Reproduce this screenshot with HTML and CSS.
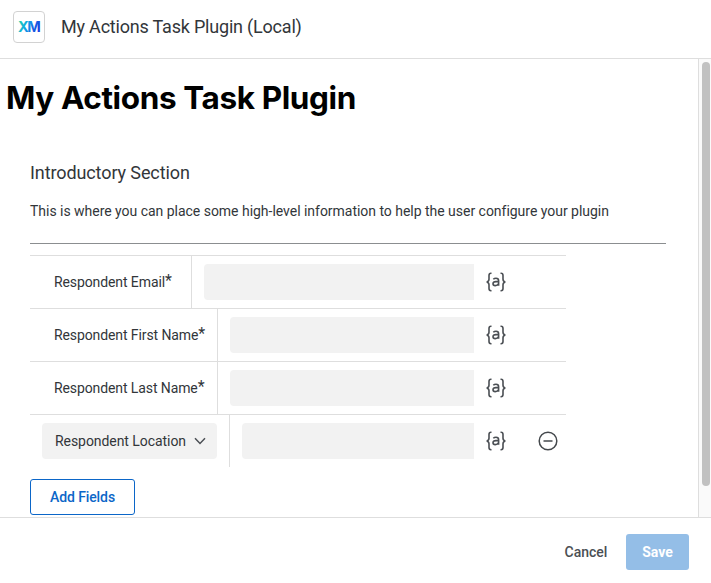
FILE: index.html
```html
<!DOCTYPE html>
<html lang="en">
<head>
<meta charset="utf-8">
<title>My Actions Task Plugin</title>
<link rel="stylesheet" href="styles.css">
</head>
<body>
<svg class="defs" aria-hidden="true">
  <symbol id="piped" viewBox="0 0 22 20">
    <path d="M6.5 1.2H6Q4 1.2 4 3.4V7.2Q4 9.5 1.7 10Q4 10.5 4 12.8V16.6Q4 18.8 6 18.8H6.5M15.5 1.2H16Q18 1.2 18 3.4V7.2Q18 9.5 20.3 10Q18 10.5 18 12.8V16.6Q18 18.8 16 18.8H15.5"/>
    <path d="M8.3 7.3Q9.3 6.3 11 6.3Q13.6 6.3 13.6 8.7V13.7M13.6 9.6H11Q8 9.7 8 11.7Q8 13.6 10.2 13.6Q12.6 13.6 13.6 11.6"/>
  </symbol>
</svg>
<div class="dialog">
  <header class="header">
    <div class="logo">
      <svg width="24" height="18" viewBox="0 0 24 18">
        <defs><linearGradient id="xm" x1="0" x2="1" y1="0" y2=".3"><stop offset="0" stop-color="#20dfa0"/><stop offset=".48" stop-color="#10a4e8"/><stop offset="1" stop-color="#1642e0"/></linearGradient></defs>
        <text class="mark" x=".9" y="14" fill="url(#xm)">XM</text>
      </svg>
    </div>
    <span class="title">My Actions Task Plugin (Local)</span>
  </header>
  <div class="body">
    <main class="content">
      <h1>My Actions Task Plugin</h1>
      <section class="section">
        <h2>Introductory Section</h2>
        <p>This is where you can place some high-level information to help the user configure your plugin</p>
        <hr>
        <div class="fields">
          <div class="row"><div class="label email"><span class="name">Respondent Email</span><span class="star">*</span></div><div class="input"></div><svg class="piped"><use href="#piped"/></svg></div>
          <div class="row"><div class="label first"><span class="name">Respondent First Name</span><span class="star">*</span></div><div class="input"></div><svg class="piped"><use href="#piped"/></svg></div>
          <div class="row"><div class="label last"><span class="name">Respondent Last Name</span><span class="star">*</span></div><div class="input"></div><svg class="piped"><use href="#piped"/></svg></div>
          <div class="row">
            <div class="label choice"><div class="select"><span>Respondent Location</span><svg width="12" height="8" viewBox="0 0 12 8"><path d="M1 1.2L6 6.4L11 1.2"/></svg></div></div>
            <div class="input"></div><svg class="piped"><use href="#piped"/></svg>
            <svg class="remove" viewBox="0 0 20 20"><circle cx="10" cy="10" r="8.8"/><path d="M5.5 10H14.5"/></svg>
          </div>
        </div>
        <button class="add">Add Fields</button>
      </section>
    </main>
    <div class="scrollbar"><div class="thumb"></div></div>
  </div>
  <footer class="footer"><button class="cancel">Cancel</button><button class="save">Save</button></footer>
</div>
</body>
</html>
```
FILE: styles.css
```css
* { box-sizing: border-box; }
body { margin: 0; background: #fff; color: #32363a; font: 14px/20px Roboto, "Liberation Sans", sans-serif; overflow: hidden; }
.defs { position: absolute; width: 0; height: 0; }
.dialog { display: flex; flex-direction: column; height: 583px; }
.header { display: flex; align-items: center; gap: 16px; height: 59px; padding: 0 13px 5px; border-bottom: 1px solid #dedede; flex: none; }
.logo { display: flex; align-items: center; justify-content: center; width: 32px; height: 32px; border: 1px solid #d2d2d2; border-radius: 4px; }
.mark { font: 700 14.5px Inter, sans-serif; letter-spacing: -1.4px; }
.title { font-size: 18px; letter-spacing: -.2px; }
.body { display: flex; height: 458px; flex: none; overflow: hidden; }
.content { flex: 1; }
h1 { margin: 17px 0 0 6px; font: 700 31.5px/44px Inter, sans-serif; color: #000; letter-spacing: -.39px; white-space: nowrap; }
.section { padding: 41px 32px 0 30px; }
h2 { margin: 0; font-size: 18px; line-height: 24px; font-weight: 400; letter-spacing: -.1px; }
p { margin: 16px 0 22px; line-height: 20px; letter-spacing: -.025px; white-space: nowrap; }
hr { margin: 0 0 11px; border: 0; height: 1px; background: #8b8e90; }
.fields { width: 536px; }
.row { display: flex; align-items: center; height: 53px; border-top: 1px solid #dedede; }
.label { display: flex; align-items: center; align-self: stretch; padding-left: 24px; border-right: 1px solid #dedede; flex: none; }
.name { letter-spacing: -.1px; }
.email { width: 162px; }
.first, .last { width: 188px; }
.choice { width: 200px; padding-left: 12px; }
.star { font-size: 16px; margin-top: -3px; }
.input { height: 36px; margin-left: 12px; flex: 1; background: #f2f2f2; border-radius: 4px 0 0 4px; }
.piped { width: 22px; height: 20px; margin-left: 11px; margin-right: 59px; fill: none; stroke: #4b4f54; stroke-width: 1.6; flex: none; }
.remove { width: 20px; height: 20px; margin-left: -28px; margin-right: 8px; fill: none; stroke: #44484c; stroke-width: 1.5; flex: none; }
.select { display: flex; align-items: center; justify-content: space-between; width: 175px; height: 36px; padding: 0 11px 0 13px; background: #f2f2f2; border-radius: 4px; letter-spacing: -.06px; }
.select path { fill: none; stroke: #4b4f54; stroke-width: 1.5; }
button { height: 36px; padding: 0; border-radius: 3px; font: 500 14px/20px Roboto, sans-serif; letter-spacing: 0; }
.add { display: block; width: 105px; margin-top: 12px; border: 1px solid #0b66c8; background: #fff; color: #0b66c8; letter-spacing: -.1px; }
.scrollbar { width: 13px; padding: 3px 1px 0 3px; background: #fafafa; border-left: 1px solid #dedede; }
.thumb { width: 8px; height: 424px; border-radius: 4px; background: #c1c1c1; }
.footer { display: flex; justify-content: flex-end; align-items: center; gap: 6px; height: 66px; padding: 3px 22px 0 0; border-top: 1px solid #dedede; flex: none; }
.cancel { width: 68px; border: 0; background: transparent; color: #4b4f54; }
.save { width: 63px; border: 0; background: #94bee7; color: #fff; font-weight: 700; }
```
